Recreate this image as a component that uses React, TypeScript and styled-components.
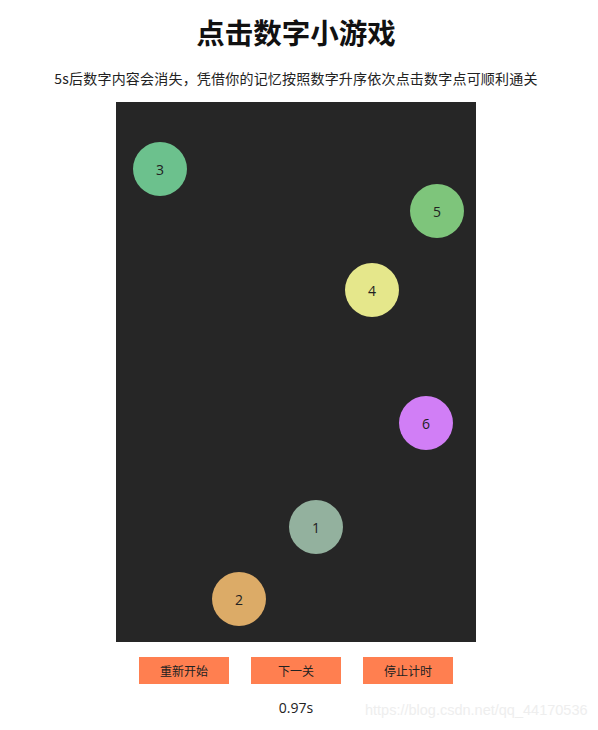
import React from "react";
import styled, { createGlobalStyle } from "styled-components";

const Global = createGlobalStyle`
  html, body {
    margin: 0;
    padding: 0;
    background: #ffffff;
  }
  body {
    font-family: "Noto Sans CJK SC", "Noto Sans", sans-serif;
    color: #222;
  }
`;

const Page = styled.div`
  position: relative;
  width: 592px;
  height: 730px;
  display: flex;
  flex-direction: column;
  align-items: center;
`;

const Title = styled.h1`
  margin: 12px 0 0;
  font-size: 28.5px;
  line-height: 40px;
  font-weight: 700;
  color: #111;
`;

const Hint = styled.p`
  margin: 16px 0 0;
  font-size: 14px;
  line-height: 20px;
  letter-spacing: 0.2px;
  color: #222;
`;

const Board = styled.div`
  position: relative;
  margin-top: 14px;
  width: 360px;
  height: 540px;
  background: #262626;
`;

const Dot = styled.div<{ $color: string }>`
  position: absolute;
  width: 54px;
  height: 54px;
  margin: -27px 0 0 -27px;
  border-radius: 50%;
  background: ${(p) => p.$color};
  display: flex;
  align-items: center;
  justify-content: center;
  font-family: "Open Sans", "Noto Sans", sans-serif;
  font-size: 14px;
  color: #222;
`;

const Controls = styled.div`
  margin-top: 15px;
  display: flex;
  gap: 22px;
`;

const Button = styled.button`
  width: 90px;
  height: 27px;
  border: none;
  padding: 0;
  background: #ff7f50;
  color: #222;
  font-family: "Noto Sans CJK SC", sans-serif;
  font-size: 12px;
  cursor: pointer;
`;

const Timer = styled.div`
  margin-top: 14px;
  font-family: "Open Sans", "Noto Sans", sans-serif;
  font-size: 14px;
  line-height: 20px;
  color: #222;
`;

const Mark = styled.div`
  position: absolute;
  left: 365px;
  top: 702px;
  font-family: "Liberation Sans", sans-serif;
  font-size: 14.5px;
  color: #eeeeee;
  white-space: nowrap;
`;

const dots = [
  { n: 3, x: 44, y: 67, color: "#6cc18d" },
  { n: 5, x: 321, y: 109, color: "#7ec57b" },
  { n: 4, x: 256, y: 188, color: "#e5e78b" },
  { n: 6, x: 310, y: 321, color: "#d17ef6" },
  { n: 1, x: 200, y: 425, color: "#93b19e" },
  { n: 2, x: 123, y: 497, color: "#dcab67" },
];

export default function App() {
  return (
    <>
      <Global />
      <Page>
        <Title>点击数字小游戏</Title>
        <Hint>5s后数字内容会消失，凭借你的记忆按照数字升序依次点击数字点可顺利通关</Hint>
        <Board>
          {dots.map((d) => (
            <Dot key={d.n} $color={d.color} style={{ left: d.x, top: d.y }}>
              {d.n}
            </Dot>
          ))}
        </Board>
        <Controls>
          <Button>重新开始</Button>
          <Button>下一关</Button>
          <Button>停止计时</Button>
        </Controls>
        <Timer>0.97s</Timer>
        <Mark>https://blog.csdn.net/qq_44170536</Mark>
      </Page>
    </>
  );
}
